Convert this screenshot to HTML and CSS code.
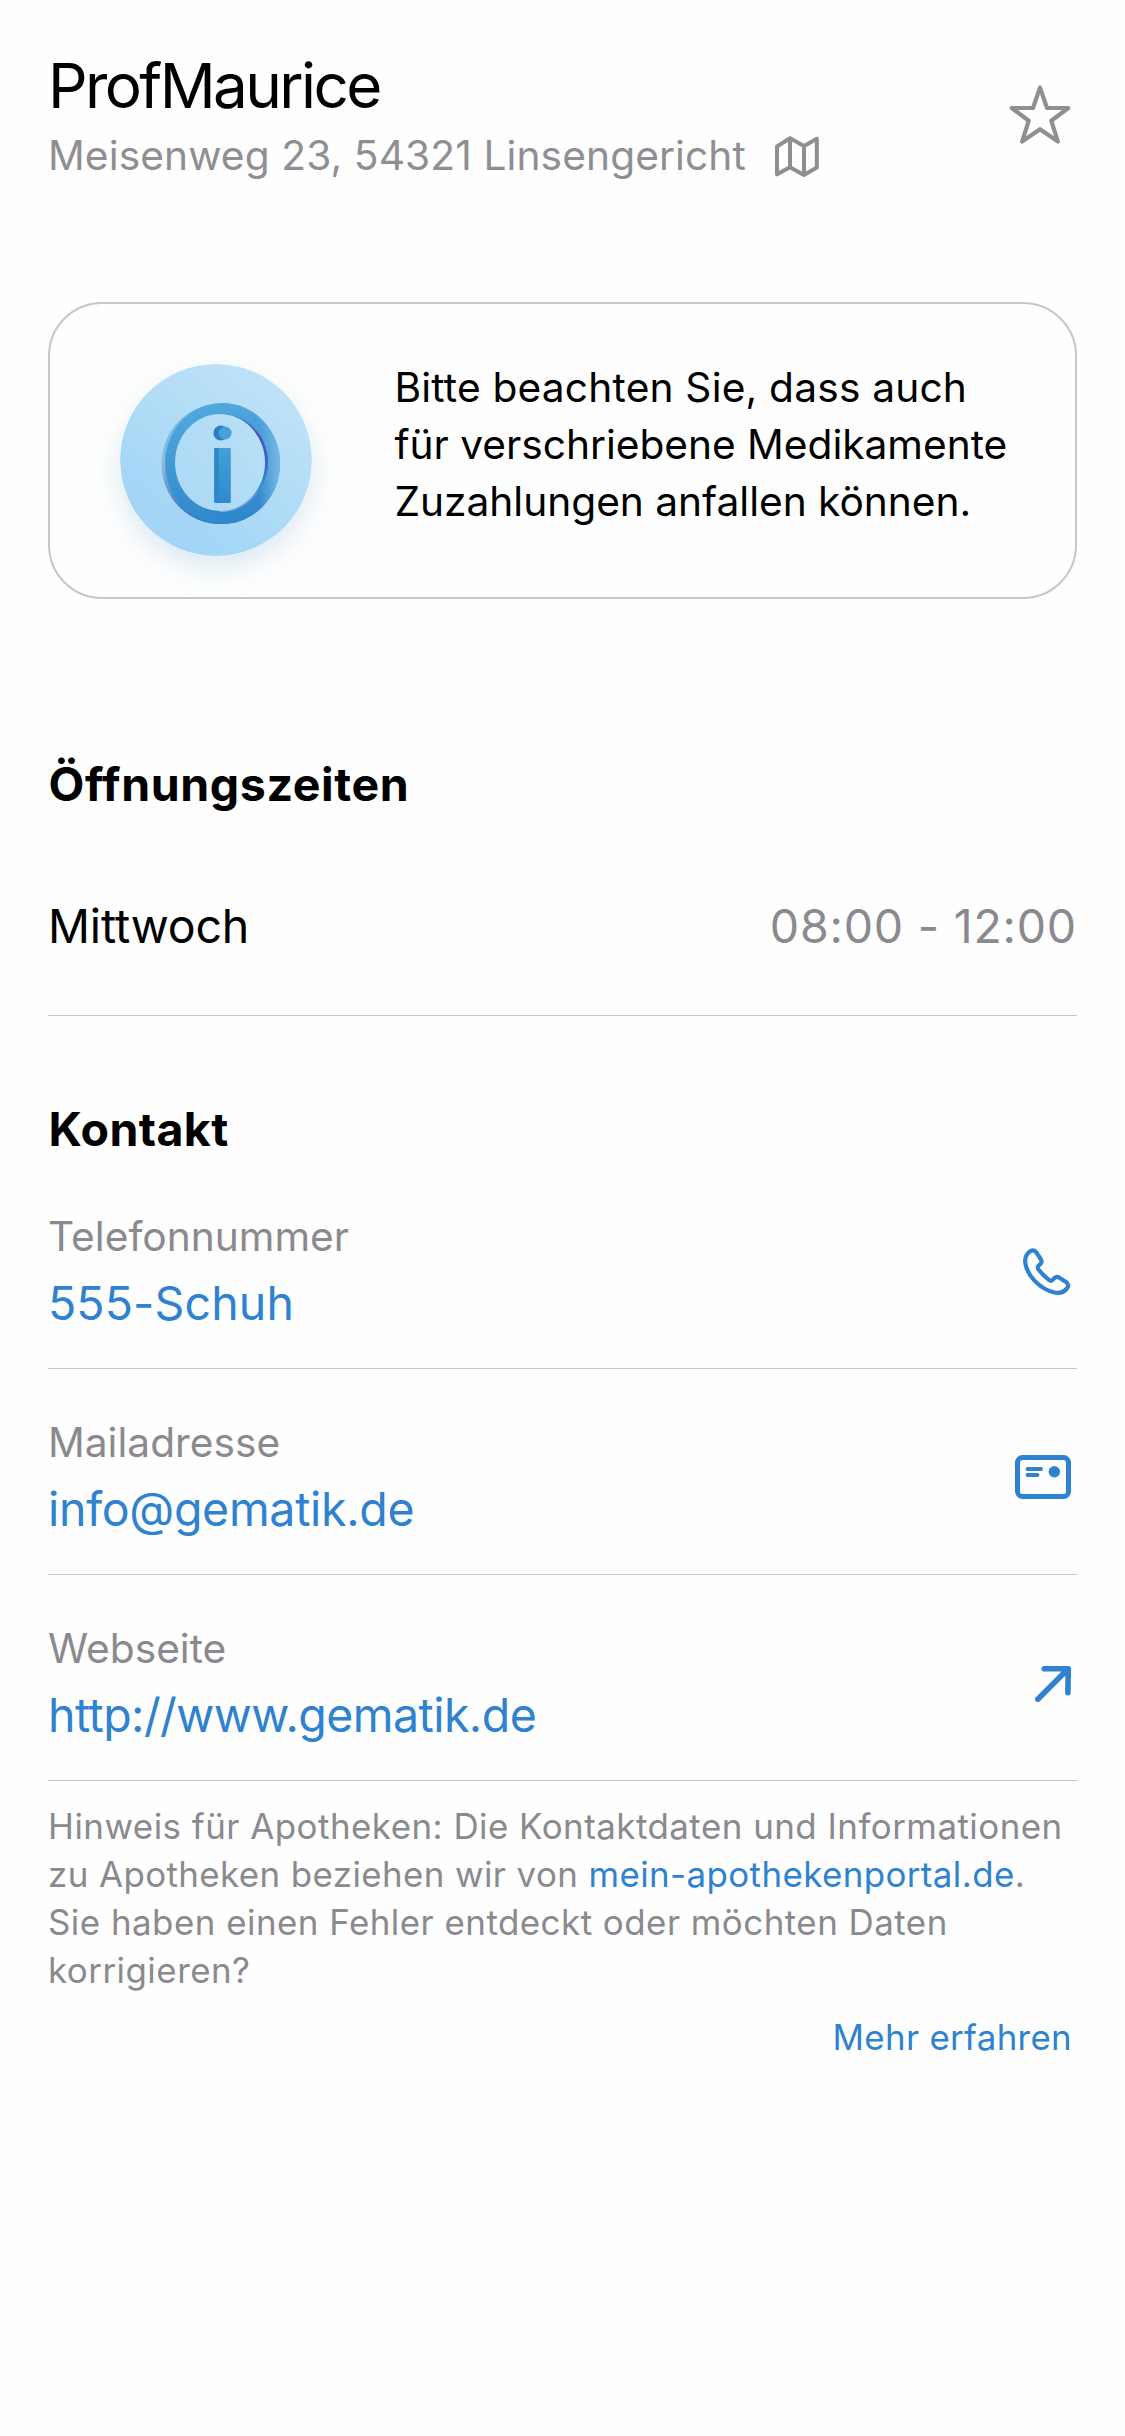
FILE: index.html
```
<!DOCTYPE html>
<html lang="de">
<head>
<meta charset="utf-8">
<title>ProfMaurice</title>
<link rel="stylesheet" href="styles.css">
</head>
<body>
<main class="page">
  <header class="header">
    <div class="identity">
      <h1 class="name">ProfMaurice</h1>
      <div class="address">
        <span class="address-text">Meisenweg 23, 54321 Linsengericht</span>
        <svg class="icon-map" viewBox="0 0 44 42" width="44" height="42" fill="none" stroke="currentColor" stroke-width="4" stroke-linejoin="round" stroke-linecap="round"><path d="M2 10.5 15 2.3 29 10 41.8 2.8V31.5L29 38.9 15 31.2 2 38.3ZM15 2.3V31.2M29 10V38.9"/></svg>
      </div>
    </div>
    <svg class="icon-star" viewBox="0 0 62 60" width="62" height="60" fill="none" stroke="currentColor" stroke-width="4.2" stroke-linejoin="round"><path d="M31 2.6 38 23H59.3L42.3 35.8 48.9 56.6 31 44.2 13.1 56.6 19.7 35.8 2.7 23H24Z"/></svg>
  </header>

  <section class="notice">
    <svg class="icon-info" viewBox="0 0 192 192" width="192" height="192">
      <defs>
        <linearGradient id="disc" x1="0.2" y1="0.9" x2="0.8" y2="0.1"><stop offset="0" stop-color="#a1d4f7"/><stop offset="0.55" stop-color="#b1dcf6"/><stop offset="1" stop-color="#bfe2f8"/></linearGradient>
        <linearGradient id="ring" x1="0.35" y1="0" x2="0.5" y2="1"><stop offset="0" stop-color="#52a9de"/><stop offset="0.5" stop-color="#3e98d5"/><stop offset="1" stop-color="#2f86cc"/></linearGradient>
        <linearGradient id="side" x1="0" y1="0" x2="0" y2="1"><stop offset="0" stop-color="#6fb9e4"/><stop offset="0.5" stop-color="#8fb9dc"/><stop offset="1" stop-color="#2d72b4"/></linearGradient>
        <linearGradient id="light" x1="0" y1="0" x2="1" y2="0"><stop offset="0.82" stop-color="#7ab7e8" stop-opacity="0"/><stop offset="1" stop-color="#7ab7e8"/></linearGradient>
        <linearGradient id="rim" x1="0" y1="0" x2="0" y2="1"><stop offset="0" stop-color="#4b86cf"/><stop offset="0.2" stop-color="#4a4bb8"/><stop offset="0.5" stop-color="#3f66c4"/><stop offset="0.75" stop-color="#3a8fd0"/><stop offset="1" stop-color="#8ab4e4"/></linearGradient>
        <linearGradient id="hole" x1="0" y1="1" x2="1" y2="0"><stop offset="0" stop-color="#abd8f6"/><stop offset="1" stop-color="#b9e0f6"/></linearGradient>
        <linearGradient id="stem" x1="0" y1="0" x2="0" y2="1"><stop offset="0" stop-color="#44a0d8"/><stop offset="1" stop-color="#3189cc"/></linearGradient>
      </defs>
      <circle cx="96" cy="96" r="96" fill="url(#disc)"/>
      <ellipse cx="100" cy="100" rx="58.5" ry="60" fill="url(#side)"/>
      <ellipse cx="102.5" cy="99.5" rx="57.5" ry="60.5" fill="url(#ring)"/>
      <ellipse cx="102.5" cy="99.5" rx="57.5" ry="60.5" fill="url(#light)"/>
      <path d="M100 49.5C126 49.5 148 71 148 98.5C148 126 126 148 100 148Z" fill="url(#rim)"/>
      <ellipse cx="100" cy="98.5" rx="45" ry="48.5" fill="url(#hole)"/>
      <circle cx="100.8" cy="69" r="7.4" fill="#2b7fc0"/>
      <circle cx="105.2" cy="69" r="6.4" fill="#46a0da"/>
      <rect x="94.3" y="84" width="16.5" height="55" rx="1" fill="url(#stem)"/>
      <rect x="94.3" y="84" width="4.5" height="54" rx="1" fill="#2f86c8"/>
    </svg>
    <p class="notice-text"><span class="notice-lead">Bitte beachten Sie, dass auch</span><br>für verschriebene Medikamente<br>Zuzahlungen anfallen können.</p>
  </section>

  <section class="hours">
    <h2 class="heading heading-hours">Öffnungszeiten</h2>
    <div class="hours-row">
      <span class="day">Mittwoch</span>
      <span class="time">08:00 - 12:00</span>
    </div>
  </section>

  <section class="contact">
    <h2 class="heading heading-contact">Kontakt</h2>
    <div class="entry">
      <div class="entry-body"><span class="label">Telefonnummer</span><a class="value phone">555-Schuh</a></div>
      <svg class="icon-phone" viewBox="0 0 48 48" width="48" height="48" fill="none" stroke="currentColor" stroke-width="4.2" stroke-linejoin="round"><path d="M6.2 4C9 1.4 11.8 1.9 13.5 4.6L18 11.5C19.2 13.5 18.7 14.7 17.2 16.2L15.5 17.8C14.3 19 14.6 20.3 15.7 21.7C18.8 25.7 21.8 28.7 25.9 31.9C27.3 33 28.5 33 29.7 31.8L31.5 30C32.9 28.6 34.3 28.5 36 29.6L43 34.1C45.7 35.9 45.9 38.3 43.5 41C40.6 44.3 36.6 45.5 31.6 44.5C24 42.9 17.500 38.9 11.5 32.6C6.2 27 3.2 21.2 2.3 15C1.7 10.2 3.1 6.7 6.2 4Z"/></svg>
    </div>
    <div class="entry">
      <div class="entry-body"><span class="label">Mailadresse</span><a class="value mail">info@gematik.de</a></div>
      <svg class="icon-mail" viewBox="0 0 56 44" width="56" height="44" fill="none" stroke="currentColor" stroke-linecap="round"><rect x="2.5" y="2.5" width="51" height="39" rx="5" stroke-width="5"/><path d="M12.5 14H26M12.5 20H22.5" stroke-width="3.8"/><circle cx="39.3" cy="16.8" r="5.7" fill="currentColor" stroke="none"/></svg>
    </div>
    <div class="entry">
      <div class="entry-body"><span class="label">Webseite</span><a class="value web">http://www.gematik.de</a></div>
      <svg class="icon-arrow" viewBox="0 0 36 36" width="36" height="36" fill="none" stroke="currentColor" stroke-width="5.6" stroke-linecap="round" stroke-linejoin="round"><path d="M2.8 33.2 33.2 2.8M9.3 2.8H33.2L32.9 26.7"/></svg>
    </div>
  </section>

  <footer class="hint">
    <p class="hint-text">Hinweis für Apotheken: Die Kontaktdaten und Informationen<br><span class="source">zu Apotheken beziehen wir von <a class="link">mein-apothekenportal.de</a>.</span><br>Sie haben einen Fehler entdeckt oder möchten Daten<br>korrigieren?</p>
    <a class="link more">Mehr erfahren</a>
  </footer>
</main>
</body>
</html>
```
FILE: styles.css
```
* { box-sizing: border-box; }
body { margin: 0; background: #fefefe; font-family: Inter, "Liberation Sans", sans-serif; color: #000; }
h1, h2, p { margin: 0; font-weight: 400; }
svg { display: block; flex: none; }

.page { width: 1125px; min-height: 2436px; padding: 46px 48px 0; }

.header { display: flex; justify-content: space-between; color: #8e8e93; }
.name { font-size: 62px; line-height: 80px; letter-spacing: -2.6px; color: #000; }
.address { display: flex; align-items: center; gap: 29px; font-size: 40.7px; line-height: 60px; letter-spacing: 0.1px; }
.icon-map { margin-top: 2px; }
.icon-star { margin: 38.5px 6px 0 0; }

.notice { display: flex; margin-top: 116px; height: 297px; padding: 60px 0 0 70px; border: 2px solid #c6c6c8; border-radius: 54px; }
.icon-info { border-radius: 50%; box-shadow: 0 12px 28px rgba(90, 160, 200, 0.22); }
.notice-text { margin: -5px 0 0 82.5px; font-size: 40.7px; line-height: 57px; letter-spacing: -0.03px; white-space: nowrap; }
.notice-lead { letter-spacing: 0.18px; }

.heading { font-size: 46.5px; line-height: 60px; font-weight: 700; padding-left: 0.5px; }
.heading-hours { letter-spacing: 0.6px; }
.hours { margin-top: 155px; }
.hours-row { display: flex; justify-content: space-between; margin-top: 82px; padding-bottom: 59px; border-bottom: 1px solid #c6c6c8; font-size: 46.5px; line-height: 60px; }
.day { letter-spacing: -0.15px; }
.time { color: #8a8a8e; letter-spacing: 0.78px; }

.contact { margin-top: 83px; }
.heading-contact { margin-bottom: 4px; letter-spacing: 0.4px; }
.entry { display: flex; justify-content: space-between; align-items: center; height: 206px; padding-right: 6px; border-bottom: 1px solid #c6c6c8; color: #2f82d0; }
.entry > svg { margin-top: 12px; }
.entry > .icon-mail { margin-top: 11px; }
.entry-body { display: flex; flex-direction: column; gap: 6px; padding-top: 9px; }
.label { font-size: 40.7px; line-height: 60px; color: #8a8a8e; }
.value { font-size: 46.5px; line-height: 60px; }
.phone { letter-spacing: 0.1px; }
.mail { letter-spacing: -0.3px; }
.web { letter-spacing: -0.55px; }

.hint { display: flex; flex-direction: column; padding-top: 21px; font-size: 34.9px; line-height: 48px; letter-spacing: 0.48px; color: #8a8a8e; white-space: nowrap; }
.source { letter-spacing: 0.4px; }
.link { color: #2f82d0; }
.more { align-self: flex-end; margin: 19px 5px 0 0; letter-spacing: 0.3px; }
```
